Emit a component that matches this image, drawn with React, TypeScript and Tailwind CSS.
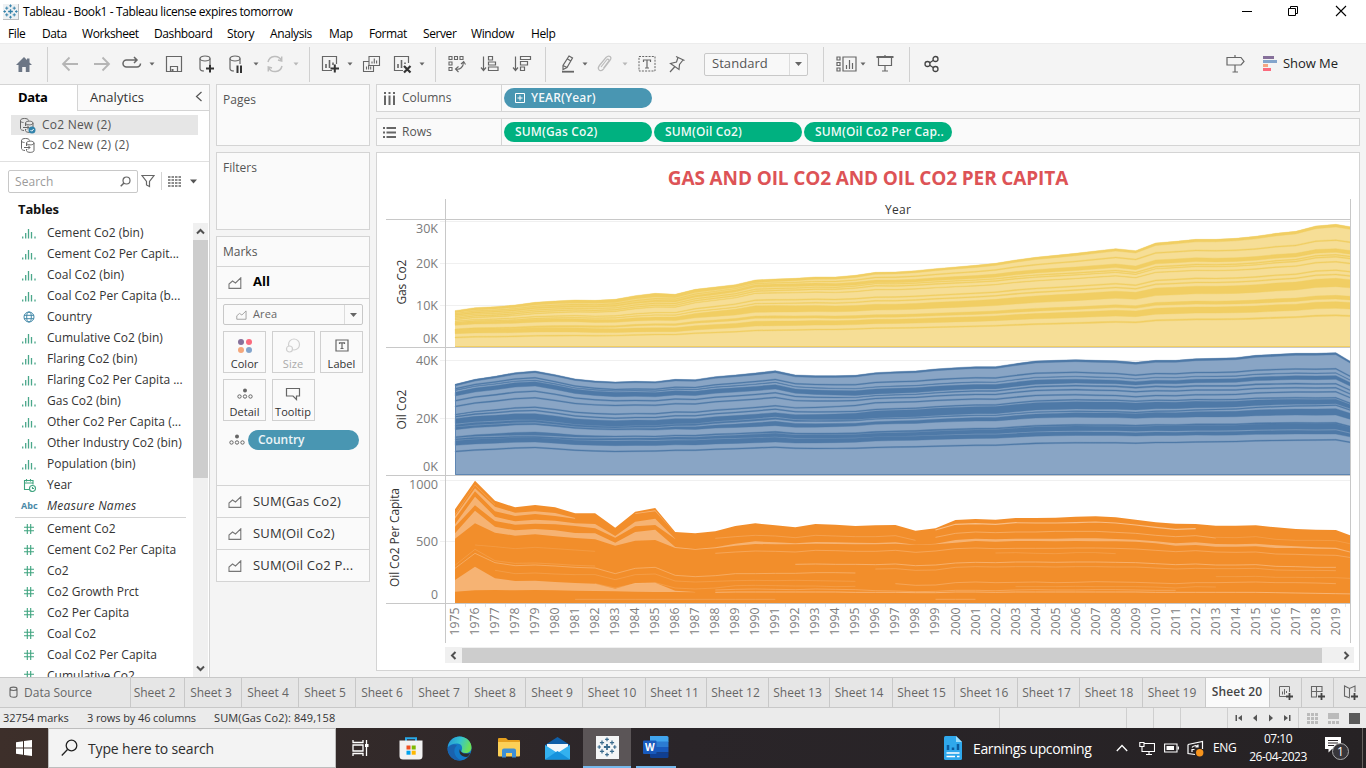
import type { ReactNode } from "react";

const CHART_LEFT = 455;
const STEP = 20.02;
const xOf = (year: number) => CHART_LEFT + (year - 1975) * STEP;

// Upper edges of each stacked total, one value per year from 1975 to 2020, in thirds of a pixel.
const gasTop = [362, 353, 350, 345, 337, 333, 330, 331, 328, 317, 310, 313, 298, 291, 284, 270, 267, 265, 261, 261, 256, 247, 246, 242, 236, 231, 226, 220, 210, 202, 196, 190, 183, 176, 182, 159, 154, 148, 148, 145, 139, 130, 124, 108, 103, 113];
const oilTop = [583, 568, 559, 548, 543, 554, 567, 573, 576, 574, 575, 568, 569, 560, 555, 549, 542, 555, 557, 557, 556, 548, 545, 543, 537, 533, 530, 530, 521, 513, 511, 509, 511, 512, 517, 511, 511, 506, 505, 503, 496, 493, 490, 490, 488, 524];
const capTop = [118, 32, 92, 112, 105, 112, 130, 130, 173, 125, 114, 186, 190, 184, 168, 160, 166, 172, 162, 164, 168, 166, 165, 182, 175, 150, 147, 149, 144, 144, 143, 140, 139, 142, 149, 157, 161, 162, 167, 167, 166, 172, 177, 179, 180, 202];

type Band = [number, number][];

const gasKeys = [1975, 1985, 1990, 1996, 2009, 2019];
const gasBands: Band[] = [
  [[362, 368], [310, 321], [270, 278], [247, 253], [182, 189], [103, 111]],
  [[370, 372], [324, 328], [280, 282], [261, 264], [207, 210], [149, 152]],
  [[373, 377], [330, 335], [284, 292], [270, 278], [228, 239], [176, 187]],
  [[379, 381], [338, 341], [296, 299], [280, 282], [246, 249], [193, 196]],
  [[383, 386], [344, 347], [302, 305], [286, 289], [252, 254], [199, 202]],
  [[388, 390], [350, 352], [309, 311], [298, 300], [262, 264], [214, 217]],
  [[393, 395], [367, 369], [329, 332], [320, 323], [284, 287], [239, 242]],
  [[397, 400], [374, 376], [340, 342], [331, 334], [295, 298], [252, 255]],
  [[399, 406], [381, 391], [347, 367], [343, 360], [307, 328], [265, 290]],
  [[417, 421], [401, 406], [378, 385], [374, 382], [347, 355], [316, 327]],
  [[419, 431], [413, 425], [394, 408], [388, 401], [363, 380], [335, 355]],
  [[441, 444], [432, 435], [420, 423], [413, 416], [395, 399], [374, 378]],
];

const oilKeys = [1975, 1979, 1983, 1991, 1996, 2009, 2019];
const oilBands: Band[] = [
  [[583, 588], [543, 548], [576, 580], [542, 548], [548, 553], [517, 523], [488, 494]],
  [[595, 598], [562, 565], [597, 600], [567, 570], [576, 579], [554, 557], [535, 538]],
  [[600, 602], [570, 572], [602, 604], [576, 578], [590, 592], [566, 568], [548, 550]],
  [[607, 618], [575, 588], [607, 620], [584, 597], [597, 612], [575, 585], [557, 568]],
  [[631, 634], [602, 605], [631, 634], [607, 610], [616, 618], [591, 595], [580, 583]],
  [[648, 651], [622, 625], [645, 648], [621, 624], [624, 627], [604, 607], [592, 595]],
  [[673, 675], [650, 653], [671, 674], [646, 649], [637, 640], [619, 622], [604, 607]],
  [[679, 682], [660, 663], [683, 686], [656, 659], [657, 660], [632, 635], [622, 625]],
  [[686, 701], [671, 689], [692, 709], [668, 680], [663, 684], [639, 660], [628, 641]],
  [[704, 710], [691, 697], [710, 714], [683, 688], [686, 688], [666, 669], [644, 647]],
  [[712, 719], [700, 704], [716, 720], [694, 707], [695, 703], [671, 685], [656, 675]],
  [[740, 743], [726, 736], [738, 741], [724, 728], [724, 728], [705, 709], [697, 701]],
  [[746, 750], [739, 743], [745, 750], [730, 740], [730, 740], [710, 724], [701, 718]],
  [[752, 766], [743, 756], [753, 767], [742, 756], [741, 753], [728, 738], [721, 732]],
  [[783, 786], [771, 774], [783, 786], [770, 773], [771, 774], [758, 761], [748, 751]],
];

// Stretch each band between its keyed years so that it follows the total's outline.
function bandPath(band: Band, keys: number[], top: number[], base: number, offset: number) {
  const fraction = (year: number, side: 0 | 1) => {
    let k = 0;
    while (k < keys.length - 2 && year > keys[k + 1]) k++;
    const part = (i: number) => (base - band[i][side]) / (base - top[keys[i] - 1975]);
    const t = Math.min(1, (year - keys[k]) / (keys[k + 1] - keys[k]));
    return part(k) * (1 - t) + part(k + 1) * t;
  };
  const point = (i: number, side: 0 | 1) =>
    `${xOf(1975 + i).toFixed(1)},${(offset + (base - fraction(1975 + i, side) * (base - top[i])) / 3).toFixed(2)}`;
  const upper = top.map((_, i) => point(i, 0));
  const lower = top.map((_, i) => point(i, 1)).reverse();
  return `M${[...upper, ...lower].join("L")}Z`;
}

function areaPath(top: number[], base: number, offset: number) {
  const pts = top.map((v, i) => `${xOf(1975 + i).toFixed(1)},${(offset + v / 3).toFixed(2)}`);
  return `M${xOf(1975)},${offset + base / 3}L${pts.join("L")}L${xOf(2020)},${offset + base / 3}Z`;
}

type Strip = { from: number; rows: Band };
const capStrips: Strip[] = [
  { from: 1975, rows: [[133, 135], [44, 46], [103, 104]] },
  { from: 1975, rows: [[139, 146], [55, 64], [110, 124], [128, 138], [124, 132], [129, 138], [144, 146]] },
  { from: 1975, rows: [[163, 170], [80, 106], [140, 153], [154, 164], [149, 161], [152, 163], [160, 168], [162, 175], [198, 203], [155, 169], [146, 165], [206, 207]] },
  { from: 1975, rows: [[190, 206], [122, 160], [170, 188], [181, 197], [177, 193], [181, 199], [189, 204], [190, 208], [218, 227], [186, 212], [179, 210], [231, 234], [237, 239], [232, 235], [221, 227], [214, 222], [217, 223], [220, 223], [216, 221], [217, 222], [218, 223], [219, 223], [217, 221], [224, 225], [221, 223], [210, 218], [206, 213], [208, 215], [206, 213], [206, 213], [206, 214], [205, 213], [205, 214], [207, 214], [209, 215], [214, 220], [220, 227], [217, 225], [222, 230], [223, 230], [221, 229], [226, 234], [229, 234], [232, 236], [233, 237], [249, 252]] },
  { from: 1975, rows: [[330, 365], [290, 361], [325, 360], [333, 361], [332, 360], [336, 361], [339, 362], [341, 363], [356, 364], [339, 365], [338, 366], [362, 366], [366, 367]] },
  { from: 1984, rows: [[130, 132], [121, 124], [190, 190]] },
];

const capLines: { from: number; ys: number[]; w: number }[] = [
  { from: 1975, w: 0.6, ys: [295, 250, 278, 287, 285, 288, 292, 294, 311, 295, 292, 316, 320, 317, 311, 311, 310, 310, 308, 308, 309] },
  { from: 1975, w: 0.3, ys: [286, 238, 272, 280, 279, 282, 286, 288] },
  { from: 1976, w: 0.25, ys: [225, 230, 236, 232, 236, 240, 244] },
  { from: 1977, w: 0.3, ys: [301, 311, 309, 312, 314, 314, 329, 314, 312, 333, 336, 334, 332, 331, 332, 331, 332, 333, 334] },
  { from: 1982, w: 0.3, ys: [341, 354, 341, 338, 354, 357, 354, 347, 346, 347, 348, 348, 350, 349] },
  { from: 1981, w: 0.4, ys: [388, 388, 388, 388, 388, 388, 388, 388, 388, 388, 388] },
  { from: 1988, w: 0.4, ys: [205, 200, 196, 198, 203, 196, 198, 200, 200, 197, 211] },
  { from: 1988, w: 0.5, ys: [250, 246, 243, 244, 246, 241, 242, 244, 244, 241, 247, 243, 236, 234, 236, 235, 235, 235, 234, 234, 235, 237, 241, 245, 242, 246, 247, 246, 252, 253, 255, 256, 265] },
  { from: 1992, w: 0.7, ys: [283, 282, 283, 283, 284, 282, 287, 285, 279, 277, 278, 276, 276, 277, 276, 276, 277, 278, 281, 284, 282, 285, 285, 284, 289, 290, 292, 292] },
  { from: 1996, w: 0.4, ys: [297, 296, 301, 300, 292, 290, 291, 290, 290, 291, 290, 290, 291, 291, 294, 297, 295, 296, 296, 295, 300, 301, 301, 302] },
  { from: 1997, w: 0.5, ys: [341, 346, 345, 338, 336, 338, 337, 336, 338, 337, 335, 336, 337, 339, 341, 338, 338, 337, 336, 338, 338, 339, 341] },
  { from: 1988, w: 0.5, ys: [360, 358, 357, 358, 359, 357, 358, 359, 362, 363, 365, 364, 361, 361, 362, 360, 359, 360, 360, 359, 359, 360, 361, 361] },
  { from: 1988, w: 0.8, ys: [367, 366, 366, 366, 366, 366, 366, 367, 367, 367, 368, 368, 366, 366, 367, 366, 366, 366, 366, 366, 366, 366, 367, 367, 367, 367, 367, 367, 368, 369, 370, 371, 372] },
  { from: 1999, w: 1.1, ys: [180, 163, 161, 163, 158, 159, 159, 158, 156, 159, 165, 172, 178, 176] },
  { from: 1999, w: 0.6, ys: [202, 190, 186, 188, 186, 186, 184, 184, 184, 187, 190, 196, 200, 197, 204] },
  { from: 1999, w: 0.5, ys: [388, 388, 388] },
  { from: 2013, w: 0.3, ys: [202, 203, 200, 208, 211, 211, 212, 225] },
  { from: 2003, w: 0.3, ys: [350, 350, 350, 349, 350, 350, 350, 351, 354, 350, 351] },
  { from: 2002, w: 0.3, ys: [249, 248, 250, 251, 248, 248, 251] },
  { from: 2013, w: 0.3, ys: [320, 320, 319, 322, 322, 323, 323, 326] },
];

function stripPath({ from, rows }: Strip) {
  const at = (i: number, side: 0 | 1) => `${xOf(from + i).toFixed(1)},${(470 + rows[i][side] / 3).toFixed(2)}`;
  const up = rows.map((_, i) => at(i, 0));
  const down = rows.map((_, i) => at(i, 1)).reverse();
  return `M${[...up, ...down].join("L")}Z`;
}

const axis: [string, number, number][] = [
  ["30K", 228, 22], ["20K", 263, 22], ["10K", 305, 22], ["0K", 338, 15], ["40K", 360, 22],
  ["20K", 418, 22], ["0K", 466, 15], ["1000", 484, 29], ["500", 541, 22], ["0", 594, 7],
];

function Chart() {
  const years = Array.from({ length: 45 }, (_, i) => 1975 + i);
  return (
    <svg className="block" width="982" height="454" viewBox="377 193 982 454" fontFamily="'Open Sans', sans-serif">
      <defs>
        <clipPath id="plot">
          <rect x="454.5" y="200" width="895.5" height="404" />
        </clipPath>
      </defs>
      <g stroke="#f0f0f0" shapeRendering="crispEdges">
        {[221.5, 263.5, 305.5, 360.5, 418.5, 480.5, 541.5].map((y) => (
          <path key={y} d={`M440 ${y}H1350`} />
        ))}
      </g>
      <g clipPath="url(#plot)">
        <path d={areaPath(gasTop, 471, 190)} fill="#f6de96" />
        {gasBands.map((b, i) => (
          <path key={i} d={bandPath(b, gasKeys, gasTop, 471, 190)} fill="#f1ce63" stroke="#f1ce63" strokeWidth="0.4" />
        ))}
        <path d="M455 346.5H1350" stroke="#f1ce63" />
        <path d={areaPath(oilTop, 856, 190)} fill="#89a5c5" />
        {oilBands.map((b, i) => (
          <path key={i} d={bandPath(b, oilKeys, oilTop, 856, 190)} fill="#4e79a7" stroke="#4e79a7" strokeWidth="0.4" />
        ))}
        <path d="M455.5 385V474.5H1350" stroke="#5f86b2" fill="none" />
        <path d={areaPath(capTop, 400, 470)} fill="#f28e2b" />
        {capStrips.map((s, i) => (
          <path key={i} d={stripPath(s)} fill="#f6b373" />
        ))}
        {capLines.map((l, i) => (
          <path
            key={i}
            d={"M" + l.ys.map((y, k) => `${xOf(l.from + k).toFixed(1)},${(470 + y / 3).toFixed(2)}`).join("L")}
            fill="none"
            stroke="#f8bd85"
            strokeWidth={l.w}
          />
        ))}
      </g>
      <path
        d="M445.5 199V643M1350.5 199V643M386 219.5H1350M386 347.5H1350M386 475.5H1350M386 603.5H1350"
        stroke="#c8c8c8"
        shapeRendering="crispEdges"
      />
      <g stroke="#e4e4e4" shapeRendering="crispEdges">
        {years.map((y) => (
          <path key={y} d={`M${xOf(y) + 10} 604V607`} />
        ))}
      </g>
      <g fill="#7b7b7b" fontSize="12.5" textAnchor="end">
        {axis.map(([t, y, w], i) => (
          <text key={i} x="438" y={y + 4.5} textLength={w} lengthAdjust="spacingAndGlyphs">{t}</text>
        ))}
      </g>
      <g fill="#7d7d7d" fontSize="12.5" textAnchor="middle">
        {years.map((y) => (
          <text key={y} transform={`translate(${xOf(y) + 4} 621.5) rotate(-90)`} textLength="28" lengthAdjust="spacingAndGlyphs">{y}</text>
        ))}
      </g>
      <g fill="#333" fontSize="12" textAnchor="middle">
        <text x="898" y="214" textLength="26">Year</text>
        <text transform="translate(405.5 282) rotate(-90)" textLength="45">Gas Co2</text>
        <text transform="translate(405.5 409.5) rotate(-90)" textLength="40">Oil Co2</text>
        <text transform="translate(398.5 537.5) rotate(-90)" textLength="99">Oil Co2 Per Capita</text>
      </g>
    </svg>
  );
}

function Icon({ w = 20, h = 20, color = "#666", sw = 1.2, children }: { w?: number; h?: number; color?: string; sw?: number; children: ReactNode }) {
  return (
    <svg className="block shrink-0" width={w} height={h} viewBox={`0 0 ${w} ${h}`} fill="none" stroke={color} strokeWidth={sw}>
      {children}
    </svg>
  );
}

function Tile({ className, children }: { className: string; children: ReactNode }) {
  return <div className={`flex h-full shrink-0 items-center justify-center ${className}`}>{children}</div>;
}

function Caret({ light = false }: { light?: boolean }) {
  return (
    <svg className="block shrink-0" width="6" height="4" viewBox="0 0 6 4">
      <path d="M0.5 0.5H5.5L3 3.5Z" fill={light ? "#b8b8b8" : "#666"} />
    </svg>
  );
}

const Divider = ({ className = "" }: { className?: string }) => <div className={`h-[35px] w-px shrink-0 bg-[#d0d0d0] ${className}`} />;

function TableauMark({ size, color }: { size: number; color: string }) {
  const plus = (x: number, y: number, r: number) => `M${x - r} ${y}H${x + r}M${x} ${y - r}V${y + r}`;
  return (
    <svg className="block" width={size} height={size} viewBox="0 0 18 18" stroke={color} strokeWidth="1.1">
      <path d={plus(9, 9, 2.8)} strokeWidth="1.6" />
      <path d={plus(4.5, 5, 1.9) + plus(13.5, 5, 1.9) + plus(4.5, 13, 1.9) + plus(13.5, 13, 1.9)} />
      <path d={plus(9, 2.2, 1.7) + plus(9, 15.8, 1.7) + plus(2, 9, 1.6) + plus(16, 9, 1.6)} />
    </svg>
  );
}

function TitleBar() {
  return (
    <div className="flex h-[23px] items-center bg-white pl-[3px]">
      <div className="flex h-4 w-4 items-center justify-center border-r border-b border-[#b9bdc0] bg-[#eef1f3]">
        <TableauMark size={15} color="#2f7fa8" />
      </div>
      <span className="ml-1 pt-px text-[12px] tracking-[-0.39px] text-black">Tableau - Book1 - Tableau license expires tomorrow</span>
      <div className="mr-[19px] ml-auto flex items-center gap-9 pb-[2px]">
        <Icon w={10} h={12} color="#000" sw={1}><path d="M0 6.500H10" /></Icon>
        <Icon w={11} h={12} color="#000" sw={1}><path d="M.5 3.500H7.500V10.500H.5ZM2.500 3.500V1.500H9.500V8.500H7.500" /></Icon>
        <Icon w={12} h={12} color="#000" sw={1.1}><path d="M1 1L11 11M11 1L1 11" /></Icon>
      </div>
    </div>
  );
}

function MenuBar() {
  return (
    <div className="flex h-5 items-center bg-white pt-[2px] pl-2 text-[12px] tracking-[-0.4px] text-black">
      <span className="w-[34px]">File</span>
      <span className="w-10">Data</span>
      <span className="w-[72px]">Worksheet</span>
      <span className="w-[73px]">Dashboard</span>
      <span className="w-[43px]">Story</span>
      <span className="w-[59px]">Analysis</span>
      <span className="w-10">Map</span>
      <span className="w-[54px]">Format</span>
      <span className="w-12">Server</span>
      <span className="w-[60px]">Window</span>
      <span>Help</span>
    </div>
  );
}

function Toolbar() {
  return (
    <div className="flex h-[41px] items-center border-t border-[#ececec] bg-[#f4f4f4]">
      <Tile className="w-[47px]">
        <svg width="18" height="17" viewBox="0 0 18 17"><path d="M9 1L1 9H3.500V16H7.200V11H10.800V16H14.500V9H17L14.500 6.500V2.500H12V4Z" fill="#6c7685" /></svg>
      </Tile>
      <Divider className="mr-[6px]" />
      <Tile className="w-8"><Icon color="#b5b5b5" sw={1.8}><path d="M18 10H3M9.500 3.500L3 10L9.500 16.500" /></Icon></Tile>
      <Tile className="w-8"><Icon color="#b5b5b5" sw={1.8}><path d="M2 10H17M10.500 3.500L17 10L10.500 16.500" /></Icon></Tile>
      <Tile className="w-7"><Icon sw={1.5}><path d="M14.500 6H4.500A3.500 3.500 0 0 0 4.500 13H15A3.500 3.500 0 0 0 18.500 9.500M12 3L15 6L12 9" /></Icon></Tile>
      <Tile className="w-3"><Caret /></Tile>
      <Tile className="w-8"><Icon w={18} h={18}><path d="M1.500 1.500H16.500V16.500H1.500ZM5.500 16.500V11.500H12.500V16.500" /><path d="M7.500 14V16.500" strokeWidth="2" /></Icon></Tile>
      <Tile className="w-8">
        <Icon><ellipse cx="9" cy="4.500" rx="5" ry="2.500" /><path d="M4 4.500V14.500C4 16 6 17 8 17M14 4.500V10" /><path d="M10 14.500H18M14 10.500V18.500" stroke="#333" strokeWidth="2" /></Icon>
      </Tile>
      <Tile className="w-7">
        <Icon><ellipse cx="9" cy="4.500" rx="5" ry="2.500" /><path d="M4 4.500V14.500C4 16 6 17 8 17M14 4.500V10" /><path d="M11.500 11.500V19M15 11.500V19" stroke="#333" strokeWidth="2" /></Icon>
      </Tile>
      <Tile className="w-3"><Caret /></Tile>
      <Tile className="w-[26px]">
        <Icon color="#bdbdbd" sw={1.5}><path d="M3 8A7.200 7.200 0 0 1 16.500 6.500M17 12A7.200 7.200 0 0 1 3.500 13.500M16.700 2.500V7L13 6M3.300 17.500V13L7 14" /></Icon>
      </Tile>
      <Tile className="mr-[5px] w-4"><Caret light /></Tile>
      <Divider className="mr-[6px]" />
      <Tile className="w-7">
        <Icon><path d="M12 16.500H2.500V2.500H16.500V10" /><path d="M6 14V10M9.500 14V6M13 11V8.500" strokeWidth="1.600" /><path d="M10.500 14.500H19M14.800 10.500V18.500" stroke="#333" strokeWidth="2" /></Icon>
      </Tile>
      <Tile className="w-3"><Caret /></Tile>
      <Tile className="w-[30px]"><Icon sw={1.1}><path d="M8 2.500H18.500V11.500H8ZM8 7.500H2.500V17.500H12.500V11.500M11 9.500V7.500M13.300 9.500V4.500M15.600 9.500V6.500M5.500 15.500V12.500M7.600 15.500V11M9.700 15.500V12.500" /></Icon></Tile>
      <Tile className="w-8">
        <Icon><path d="M11 16.500H2.500V2.500H16.500V9" /><path d="M6 14V10M9.500 14V6M13 10V8.500" strokeWidth="1.600" /><path d="M12 12L18.500 18.500M18.500 12L12 18.500" stroke="#333" strokeWidth="2.200" /></Icon>
      </Tile>
      <Tile className="mr-[9px] w-2"><Caret /></Tile>
      <Divider className="mr-[5px]" />
      <Tile className="w-8"><Icon sw={1.1}><path d="M2 2.500H5V5.500H2ZM7.500 2.500H10.500V5.500H7.500ZM13 2.500H16V5.500H13ZM2 8H5V11H2ZM2 13.500H5V16.500H2ZM9 15C13 16 16.500 13 16.500 8M14 10L16.700 7.500L18.500 10.500M11.500 12.500L8.500 15L11.500 18" /></Icon></Tile>
      <Tile className="ml-px w-8"><Icon><path d="M3.500 2.500V16.500M1 13.500L3.500 16.500L6 13.500M8.500 2.500H12.500V6H8.500ZM8.500 8H15.500V11H8.500ZM8.500 13H18V16.500H8.500Z" /></Icon></Tile>
      <Tile className="mr-[7px] w-8"><Icon><path d="M3.500 2.500V16.500M1 13.500L3.500 16.500L6 13.500M8.500 2.500H18.500V5.500H8.500ZM8.500 7.500H15.500V11H8.500ZM8.500 13H12.500V16.500H8.500Z" /></Icon></Tile>
      <Divider className="mr-2" />
      <Tile className="w-7"><Icon><path d="M11 2L14.500 4L9 13.500L5 15.500V11.500ZM9.500 5L13 7M5 11.500L9 13.500" /><path d="M4 17.700H16" strokeWidth="1.800" /></Icon></Tile>
      <Tile className="w-[6px]"><Caret /></Tile>
      <Tile className="w-[34px]"><Icon color="#bbb"><path d="M4 12L11 3.500C14 .5 17.500 3 15 6.500L8 15.500C5 18.500 1.500 15 4.500 11.500M6 13L11.500 6C13 4 15 6 13.500 7.500L8.500 14" /></Icon></Tile>
      <Tile className="w-[6px]"><Caret light /></Tile>
      <Tile className="ml-[3px] w-8">
        <Icon><path d="M2 2.500H18V17H2Z" strokeDasharray="2 1.200" strokeWidth="1" /><path d="M6.500 8V6H13.500V8M10 6V14M8 14H12" /></Icon>
      </Tile>
      <Tile className="w-7"><Icon><path d="M9 2.500L17.500 6.500M11 3.500L9.500 8L3.500 9.500L12 15.500L12.500 10.500L16 6M8 12.500L3 18" /></Icon></Tile>
      <div className="ml-[13px] flex h-[23px] w-[104px] shrink-0 items-center rounded-[2px] border border-[#c8c8c8] bg-[#f8f8f8]">
        <span className="w-[84px] pl-[7px] text-[13px] tracking-[0.05px] text-[#555]">Standard</span>
        <div className="flex h-full flex-1 items-center justify-center border-l border-[#dcdcdc]">
          <svg width="7" height="4" viewBox="0 0 7 4"><path d="M0 0H7L3.500 4Z" fill="#666" /></svg>
        </div>
      </div>
      <Divider className="mr-2 ml-[15px]" />
      <Tile className="w-7"><Icon w={22}><path d="M2 3H5V6H2ZM2 8.500H5V11.500H2ZM2 14H5V17H2ZM8 3H21V17H8ZM11.500 15V11M14.500 15V6M17.500 15V9" /></Icon></Tile>
      <Tile className="w-[6px]"><Caret /></Tile>
      <Tile className="ml-[3px] w-8"><Icon><path d="M1.500 3H18.500" strokeWidth="2" /><path d="M3.500 3V11.500H16.500V3M10 11.500V17M7 17H13M10 1V3" /></Icon></Tile>
      <Divider className="mr-2 ml-2" />
      <Tile className="w-7"><Icon color="#444" sw={1.3}><circle cx="5.500" cy="10" r="2.500" /><circle cx="13.500" cy="5" r="2.500" /><circle cx="13.500" cy="15" r="2.500" /><path d="M7.700 8.700L11.500 6.300M7.700 11.300L11.500 13.700" /></Icon></Tile>
      <Tile className="ml-auto w-7"><Icon><path d="M2 3.500H16L19 7.500L16 11H2ZM10 1V3.500M10 11V18M7.500 18H13" /></Icon></Tile>
      <div className="mr-7 ml-[14px] flex items-center">
        <svg width="15" height="16" viewBox="0 0 15 16"><path d="M0 0H11V3H0Z" fill="#86709a" /><path d="M0 4H14V7H0Z" fill="#84a5cc" /><path d="M0 8H5V11H0Z" fill="#f4a582" /><path d="M0 12H8V15H0Z" fill="#fb6a7d" /></svg>
        <span className="ml-[5px] text-[13px] tracking-[-0.05px] text-[#222]">Show Me</span>
      </div>
    </div>
  );
}

function SourceIcon({ checked = false }: { checked?: boolean }) {
  return (
    <Icon w={17} h={17} color="#666" sw={1}>
      <path d="M5 13.500C3 13.500 1.500 12.500 1.500 11.500V3.500M1.500 3.500C1.500 .8 9.500 .8 9.500 3.500M1.500 3.500C1.500 5 3 5.500 4.500 5.500M6.500 6V9M6.500 12V13.500C6.500 16 14 16 14 13.500V6M6.500 6C6.500 8.500 14 8.500 14 6C14 3.500 6.500 3.500 6.500 6ZM4 10.500H10M8 8.500L10 10.500L8 12.500" />
      {checked && <><circle cx="13" cy="13" r="3.500" fill="#3283ab" stroke="none" /><path d="M11.500 13L12.700 14.200L14.700 12" stroke="#fff" /></>}
    </Icon>
  );
}

type Kind = "bin" | "geo" | "date" | "text" | "num";
function FieldIcon({ kind }: { kind: Kind }) {
  if (kind === "bin") return <Icon w={14} h={12} color="#4aa78a" sw={1.3}><path d="M.7 9.500V11.500M3.700 6V11.500M6.500 2V11.500M9.500 5V11.500M13 9.500V11.500" /></Icon>;
  if (kind === "geo") return <Icon w={14} h={14} color="#4389a8" sw={1}><circle cx="7" cy="7" r="5" /><ellipse cx="7" cy="7" rx="2.300" ry="5" /><path d="M2 5.300H12M2 8.700H12" /></Icon>;
  if (kind === "date") return <Icon w={14} h={14} color="#3fa47f" sw={1.1}><path d="M7 11.500H2.500V2.500H11V6.500M2.500 5H11M4.500 1V3.500M8.500 1V3.500" /><circle cx="10.500" cy="10.500" r="3" /><path d="M10.500 9V10.500H12" /></Icon>;
  if (kind === "text") return <span className="w-4 text-[9px] leading-none font-bold text-[#4a8aa8]">Abc</span>;
  return <Icon w={12} h={12} color="#3fa47f" sw={1.1}><path d="M1 4.300H11M1 7.700H11M4.300 1V11M7.700 1V11" /></Icon>;
}

const dims: [string, Kind][] = [
  ["Cement Co2 (bin)", "bin"], ["Cement Co2 Per Capit...", "bin"], ["Coal Co2 (bin)", "bin"], ["Coal Co2 Per Capita (b...", "bin"],
  ["Country", "geo"], ["Cumulative Co2 (bin)", "bin"], ["Flaring Co2 (bin)", "bin"], ["Flaring Co2 Per Capita ...", "bin"],
  ["Gas Co2 (bin)", "bin"], ["Other Co2 Per Capita (...", "bin"], ["Other Industry Co2 (bin)", "bin"], ["Population (bin)", "bin"],
  ["Year", "date"], ["Measure Names", "text"],
];
const measures = ["Cement Co2", "Cement Co2 Per Capita", "Co2", "Co2 Growth Prct", "Co2 Per Capita", "Coal Co2", "Coal Co2 Per Capita", "Cumulative Co2"];

function Field({ name, kind }: { name: string; kind: Kind }) {
  return (
    <div className="flex h-[21px] shrink-0 items-center">
      <div className="flex w-[18px] justify-center">
        <FieldIcon kind={kind} />
      </div>
      <span className={`ml-[9px] whitespace-nowrap ${kind === "text" ? "tracking-[0.3px] italic" : ""}`}>{name}</span>
    </div>
  );
}

const Chevron = ({ d }: { d: string }) => <Icon w={9} h={9} color="#505050" sw={2}><path d={d} /></Icon>;

function DataPane() {
  return (
    <div className="flex w-[210px] shrink-0 flex-col border-t border-r border-[#d4d4d4] bg-white">
      <div className="flex h-[26px] shrink-0">
        <div className="w-[77px] pt-[3px] pl-[18px] text-[13px] font-bold tracking-[-0.35px] text-black">Data</div>
        <div className="flex flex-1 justify-between border-b border-l border-[#d4d4d4] bg-[#fafafa] pt-[3px] pr-[6px] pl-3 text-[13px] tracking-[0.05px] text-[#333]">
          <span>Analytics</span>
          <span className="pt-[3px]"><Icon w={8} h={11} color="#555"><path d="M6.500 1L1.500 5.500L6.500 10" /></Icon></span>
        </div>
      </div>
      <div className="h-[51px] shrink-0 border-b border-[#e0e0e0] pt-1 pl-[11px] text-[12px] tracking-[0.22px] text-[#555]">
        <div className="flex h-5 w-[187px] items-center bg-[#e6e6e6] pl-2">
          <SourceIcon checked />
          <span className="ml-[6px]">Co2 New (2)</span>
        </div>
        <div className="flex h-5 items-center pl-[9px]">
          <SourceIcon />
          <span className="ml-[5px]">Co2 New (2) (2)</span>
        </div>
      </div>
      <div className="flex h-[38px] shrink-0 items-center pl-2">
        <div className="flex h-[23px] w-[130px] items-center justify-between rounded-[2px] border border-[#c8c8c8] pr-[6px] pl-[6px]">
          <span className="pt-px text-[12px] tracking-[0.05px] text-[#9b9b9b]">Search</span>
          <Icon w={11} h={11} color="#666"><circle cx="6.500" cy="4.500" r="3.500" /><path d="M4 7L.7 10.300" strokeWidth="1.500" /></Icon>
        </div>
        <span className="ml-[3px]"><Icon w={14} h={14}><path d="M1 1.500H13L8.500 7.500V12.500L5.500 11V7.500Z" /></Icon></span>
        <div className="mx-[6px] h-[18px] w-px bg-[#d4d4d4]" />
        <Icon w={13} h={11} sw={1.5}><path d="M0 1H13M0 4H13M0 7H13M0 10H13" strokeDasharray="2.500 1" /></Icon>
        <svg className="ml-[9px]" width="7" height="5" viewBox="0 0 7 5"><path d="M0 0.500H7L3.500 4.500Z" fill="#555" /></svg>
      </div>
      <div className="h-[22px] shrink-0 pl-[18px] text-[13px] leading-[19px] font-bold tracking-[-0.15px] text-[#111]">Tables</div>
      <div className="flex h-[455px]">
        <div className="flex w-[193px] flex-col overflow-hidden pl-5 text-[12px] text-[#333]">
          {dims.map(([n, k]) => <Field key={n} name={n} kind={k} />)}
          <div className="-ml-[5px] mt-px h-px w-[171px] shrink-0 bg-[#d4d4d4]" />
          {measures.map((n) => <Field key={n} name={n} kind="num" />)}
        </div>
        <div className="mt-px flex w-[15px] flex-col items-center bg-[#f0f0f0]">
          <div className="flex h-[17px] items-center"><Chevron d="M1 6.500L4.500 3L8 6.500" /></div>
          <div className="h-[238px] w-full bg-[#cdcdcd]" />
          <div className="mt-auto flex h-[17px] items-center"><Chevron d="M1 2.500L4.500 6L8 2.500" /></div>
        </div>
      </div>
    </div>
  );
}

const AreaIcon = ({ small = false }: { small?: boolean }) => (
  <svg className="block shrink-0" width={small ? 11 : 14} height={small ? 10 : 12} viewBox="0 0 14 12" fill="none" stroke={small ? "#999" : "#777"} strokeWidth="1.1">
    <path d="M1 11.400V7L4.500 4L7.500 6L12.800 .8V11.400Z" />
  </svg>
);
const DetailIcon = () => (
  <Icon w={16} h={12} color="#666" sw={1}>
    <circle cx="8" cy="2.500" r="2" fill="#666" stroke="none" />
    <circle cx="2.500" cy="8.500" r="1.700" /><circle cx="8" cy="8.500" r="1.700" /><circle cx="13.500" cy="8.500" r="1.700" />
  </Icon>
);

function MarkButton({ label, muted = false, children }: { label: string; muted?: boolean; children: ReactNode }) {
  return (
    <div className="flex h-[42px] w-[43px] flex-col items-center border border-[#d0d0d0] bg-[#fafafa]">
      <div className="flex h-[24px] items-center pt-[3px]">{children}</div>
      <span className={`text-[11px] leading-[15px] tracking-[0.05px] ${muted ? "text-[#aaa]" : "text-[#333]"}`}>{label}</span>
    </div>
  );
}

function Cards() {
  return (
    <div className="flex w-[154px] shrink-0 flex-col gap-[6px] text-[12px] text-[#555]">
      <div className="h-[62px] border border-[#d4d4d4] bg-[#fafafa] px-[6px] py-[6px]">Pages</div>
      <div className="h-[78px] border border-[#d4d4d4] bg-[#fafafa] px-[6px] py-[6px]">Filters</div>
      <div className="h-[346px] border border-[#d4d4d4] bg-[#fafafa]">
        <div className="h-[30px] border-b border-[#d4d4d4] px-[6px] py-[6px]">Marks</div>
        <div className="flex h-8 items-center border-b border-[#d4d4d4] pl-[11px]">
          <AreaIcon />
          <span className="ml-[11px] pb-[2px] text-[13px] font-bold text-black">All</span>
        </div>
        <div className="h-[187px] border-b border-[#d4d4d4] px-[6px] pt-[5px]">
          <div className="flex h-[21px] w-[140px] items-center rounded-[2px] border border-[#c8c8c8] bg-[#fafafa] pl-3">
            <AreaIcon small />
            <span className="ml-[6px] flex-1 text-[11px] tracking-[0.1px] text-[#666]">Area</span>
            <div className="flex h-full w-[18px] items-center justify-center border-l border-[#dcdcdc]">
              <svg width="7" height="4" viewBox="0 0 7 4"><path d="M0 0H7L3.500 4Z" fill="#666" /></svg>
            </div>
          </div>
          <div className="mt-[6px] grid w-[140px] grid-cols-[43px_43px_43px] justify-between gap-y-[6px]">
            <MarkButton label="Color">
              <svg width="16" height="16" viewBox="0 0 16 16"><circle cx="4" cy="4" r="3" fill="#86709a" /><circle cx="12" cy="4" r="3" fill="#fb6a7d" /><circle cx="4" cy="12" r="3" fill="#f4a77c" /><circle cx="12" cy="12" r="3" fill="#82a4cc" /></svg>
            </MarkButton>
            <MarkButton label="Size" muted><Icon w={16} h={16} color="#d0d0d0"><circle cx="9" cy="6.500" r="5.500" /><circle cx="4.500" cy="11" r="3" fill="#fafafa" /></Icon></MarkButton>
            <MarkButton label="Label"><Icon w={14} h={13}><path d="M1 1H13V12H1ZM4.500 5V3.800H9.500V5M7 3.800V9.500M5.500 9.500H8.500" /></Icon></MarkButton>
            <MarkButton label="Detail"><DetailIcon /></MarkButton>
            <MarkButton label="Tooltip"><Icon w={16} h={14}><path d="M1.500 1.500H14.500V9H11.500V12.500L8 9H1.500Z" /></Icon></MarkButton>
          </div>
          <div className="mt-[9px] flex items-center pl-[6px]">
            <DetailIcon />
            <div className="ml-[3px] h-5 w-[111px] rounded-full bg-[#4996b2] pl-[10px] text-[12px] leading-[19px] font-semibold text-white/90">Country</div>
          </div>
        </div>
        {["SUM(Gas Co2)", "SUM(Oil Co2)", "SUM(Oil Co2 P..."].map((t) => (
          <div key={t} className="flex h-8 items-center border-b border-[#d4d4d4] pl-[11px] text-[13px] tracking-[0.2px] text-[#333] last:h-[31px] last:border-b-0">
            <AreaIcon />
            <span className="ml-[11px]">{t}</span>
          </div>
        ))}
      </div>
    </div>
  );
}

function Shelf({ label, icon, children }: { label: string; icon: ReactNode; children: ReactNode }) {
  return (
    <div className="flex h-7 shrink-0 border border-[#d4d4d4] bg-[#fafafa]">
      <div className="flex w-[125px] items-center border-r border-[#d4d4d4] pl-[6px] text-[12px] text-[#555]">
        {icon}
        <span className="ml-[6px]">{label}</span>
      </div>
      <div className="flex items-center gap-[2px] pl-[2px]">{children}</div>
    </div>
  );
}

const pill = "flex h-5 w-[148px] items-center rounded-full pl-[11px] text-[12px] font-semibold tracking-[0.15px] text-white/95";

function View() {
  return (
    <div className="flex w-[984px] shrink-0 flex-col gap-[6px]">
      <Shelf label="Columns" icon={<Icon w={13} h={13} sw={2}><path d="M2 0V2M2 3.500V13M6.500 0V2M6.500 3.500V13M11 0V2M11 3.500V13" /></Icon>}>
        <div className={`${pill} bg-[#4996b2]`}>
          <Icon w={10} h={10} color="#fff" sw={1}><path d="M.5 .5H9.500V9.500H.5ZM5 2.500V7.500M2.500 5H7.500" /></Icon>
          <span className="ml-[6px]">YEAR(Year)</span>
        </div>
      </Shelf>
      <Shelf label="Rows" icon={<Icon w={13} h={13} sw={2}><path d="M0 2H2M3.500 2H13M0 6.500H2M3.500 6.500H13M0 11H2M3.500 11H13" /></Icon>}>
        <div className={`${pill} bg-[#00b180]`}>SUM(Gas Co2)</div>
        <div className={`${pill} bg-[#00b180]`}>SUM(Oil Co2)</div>
        <div className={`${pill} bg-[#00b180]`}>SUM(Oil Co2 Per Cap..</div>
      </Shelf>
      <div className="h-[519px] border border-[#d4d4d4] bg-white">
        <h1 className="h-10 text-center text-[19px] leading-[50px] font-bold tracking-[-0.13px] text-[#dd5356]">GAS AND OIL CO2 AND OIL CO2 PER CAPITA</h1>
        <Chart />
        <div className="ml-[68px] flex h-4 w-[909px] items-center bg-[#f0f0f0]">
          <div className="flex w-[17px] justify-center"><Chevron d="M6.500 1L3 4.500L6.500 8" /></div>
          <div className="h-[15px] w-[860px] bg-[#cdcdcd]" />
          <div className="ml-auto mr-[3px]"><Chevron d="M2.500 1L6 4.500L2.500 8" /></div>
        </div>
      </div>
    </div>
  );
}

const sheetTabs: [string, string][] = [
  ["Sheet 2", "w-[54px] pr-[6px]"], ["Sheet 3", "w-[57px] pr-[4px]"], ["Sheet 4", "w-[57px] pr-[4px]"], ["Sheet 5", "w-[57px] pr-[4px]"],
  ["Sheet 6", "w-[57px] pr-[4px]"], ["Sheet 7", "w-[56px] pr-[3px]"], ["Sheet 8", "w-[57px] pr-[4px]"], ["Sheet 9", "w-[57px] pr-[4px]"],
  ["Sheet 10", "w-[63px] pr-[4px]"], ["Sheet 11", "w-[61px] pr-[3px]"], ["Sheet 12", "w-[62px] pr-[4px]"], ["Sheet 13", "w-[61px] pr-[3px]"],
  ["Sheet 14", "w-[63px] pr-[4px]"], ["Sheet 15", "w-[62px] pr-[4px]"], ["Sheet 16", "w-[63px] pr-[4px]"], ["Sheet 17", "w-[62px] pr-[4px]"],
  ["Sheet 18", "w-[63px] pr-[4px]"], ["Sheet 19", "w-[63px] pr-[4px]"],
];

function SheetTabs() {
  const add = <path d="M9 12.500H16M12.500 9V16" stroke="#444" strokeWidth="1.800" />;
  return (
    <div className="flex h-[31px] border-y border-[#c8c8c8] bg-[#e6e6e6] text-[12px] text-[#666]">
      <div className="flex w-[131px] items-center border-r border-[#c8c8c8] pl-[9px]">
        <span className="pb-[2px]"><Icon w={9} h={12} sw={1.1}><path d="M1 2.800C1 .5 8 .5 8 2.800V9.500C8 11.800 1 11.800 1 9.500ZM1 2.800C1 5 8 5 8 2.800" /></Icon></span>
        <span className="ml-[6px]">Data Source</span>
      </div>
      {sheetTabs.map(([n, w]) => (
        <div key={n} className={`flex shrink-0 items-center justify-center border-r border-[#c8c8c8] whitespace-nowrap ${w}`}>{n}</div>
      ))}
      <div className="flex w-[64px] shrink-0 items-center justify-center border-r border-[#c8c8c8] bg-[#fafafa] pr-[1px] pb-[2px] font-semibold tracking-[0.1px] whitespace-nowrap text-[#444]">Sheet 20</div>
      <div className="flex w-8 items-center justify-center border-r border-[#c8c8c8]"><Icon w={17} h={17} sw={1}><path d="M9 12.500H2.500V2.500H12.500V8M5.500 10.500V7.500M7.500 10.500V5M9.500 9V7" />{add}</Icon></div>
      <div className="flex w-8 items-center justify-center border-r border-[#c8c8c8]"><Icon w={17} h={17} sw={1.1}><path d="M8 13H2.500V2.500H13V8M2.500 7.500H13M7.500 2.500V13" />{add}</Icon></div>
      <div className="flex w-8 items-center justify-center"><Icon w={17} h={17} sw={1.1}><path d="M8 14L2.500 12V2L7.500 4.500L13 2V8M7.500 4.500V13" />{add}</Icon></div>
    </div>
  );
}

function StatusBar() {
  return (
    <div className="flex h-5 bg-[#ebebeb] text-[11px] leading-5 text-[#333]">
      <span className="w-[84px] pl-[3px] tracking-[-0.05px]">32754 marks</span>
      <span className="w-[127px] pl-[3px] tracking-[-0.1px]">3 rows by 46 columns</span>
      <span className="w-[788px] pl-[3px] tracking-[0.12px]">SUM(Gas Co2): 849,158</span>
      <div className="w-[127px] border-l border-[#cfcfcf]" />
      <div className="w-[27px] border-l border-[#cfcfcf]" />
      <div className="w-[27px] border-l border-[#cfcfcf]" />
      <div className="w-[47px] border-l border-[#cfcfcf]" />
      <div className="flex w-[71px] items-center justify-between border-l border-[#cfcfcf] px-[7px]">
        <svg width="8" height="8" viewBox="0 0 8 8"><path d="M0.500 1H2V7H0.500ZM7 1V7L3 4Z" fill="#555" /></svg>
        <svg width="6" height="8" viewBox="0 0 6 8"><path d="M5 0.500V7.500L1 4Z" fill="#555" /></svg>
        <svg width="6" height="8" viewBox="0 0 6 8"><path d="M1 0.500V7.500L5 4Z" fill="#555" /></svg>
        <svg width="8" height="8" viewBox="0 0 8 8"><path d="M6 1H7.500V7H6ZM1 1V7L5 4Z" fill="#555" /></svg>
      </div>
      <div className="flex flex-1 items-center gap-[10px] border-l border-[#cfcfcf] pl-2">
        <svg width="11" height="11" viewBox="0 0 11 11"><path d="M0 1.500H11M0 5.500H11M0 9.500H11" stroke="#bbb" strokeWidth="3" strokeDasharray="3 1" /></svg>
        <svg width="11" height="11" viewBox="0 0 11 11"><path d="M0 0H11V6H0Z" fill="#bbb" /><path d="M0 9.500H11" stroke="#bbb" strokeWidth="3" strokeDasharray="3 1" /></svg>
        <svg width="11" height="11" viewBox="0 0 11 11"><path d="M0 0H11V11H0Z" fill="#5a5a5a" /></svg>
      </div>
    </div>
  );
}

function Taskbar() {
  const slot = "flex h-full w-[49px] shrink-0 items-center justify-center";
  return (
    <div className="flex h-10 items-center bg-linear-to-r from-[#3d2f2a] via-[#2a2529] to-[#262224] text-white">
      <div className="flex h-full w-12 items-center justify-center">
        <svg width="16" height="16" viewBox="0 0 16 16"><path d="M0 2.300L7 1.300V7.500H0ZM8 1.100L16 0V7.500H8ZM0 8.500H7V14.700L0 13.700ZM8 8.500H16V16L8 14.900Z" fill="#fff" /></svg>
      </div>
      <div className="flex h-full w-[288px] items-center border border-[#bdbdbd] bg-[#f3f3f3] pl-3">
        <Icon w={17} h={18} color="#222" sw={1.3}><circle cx="10.500" cy="6.500" r="5.300" /><path d="M6.500 10.500L.8 16.500" /></Icon>
        <span className="ml-[10px] text-[14px] tracking-[-0.15px] text-[#2d2d2d]">Type here to search</span>
      </div>
      <div className={slot}>
        <Icon w={17} h={16} color="#fff" sw={1.3}><path d="M1 0V2.500H11V0M1 5H11V11H1ZM1 16V13.500H11V16M14.500 0V16" /><path d="M13 5.500H16.500" strokeWidth="3" /></Icon>
      </div>
      <div className={`${slot} ml-px`}>
        <svg width="24" height="24" viewBox="0 0 24 24"><path d="M7 5V2.200H17V5" fill="none" stroke="#29a9e8" strokeWidth="2" /><path d="M.5 4.500H23.500V20Q23.500 23.500 20 23.500H4Q.5 23.500 .5 20Z" fill="#f2f2f2" /><path d="M7.500 9.500H11.500V13.500H7.500Z" fill="#f05023" /><path d="M12.700 9.500H16.700V13.500H12.700Z" fill="#7fb900" /><path d="M7.500 14.700H11.500V18.700H7.500Z" fill="#00a3ee" /><path d="M12.700 14.700H16.700V18.700H12.700Z" fill="#feb800" /></svg>
      </div>
      <div className={slot}>
        <svg width="25" height="25" viewBox="0 0 25 25">
          <defs><linearGradient id="edgeTop" x1="0" y1="0" x2="1" y2="0.300"><stop offset="0" stopColor="#2492d8" /><stop offset="0.550" stopColor="#35c4cf" /><stop offset="1" stopColor="#6be05a" /></linearGradient></defs>
          <circle cx="12.500" cy="12.500" r="12" fill="#1379c8" />
          <path d="M.8 11C2 4.500 7 .5 12.500 .5C19.500 .5 24.500 5.500 24.500 11.500C24.500 15 22 17 18.500 17C15.500 17 14 15.800 14.500 14.800C16 12 15 7.500 10 7.500C6 7.500 2.500 9 .8 11Z" fill="url(#edgeTop)" />
          <path d="M10 9.500C5.500 12 6.500 22.500 15 24.200C8 26 1 20.500 .6 12.500C3 8.500 7.500 7.500 10 9.500Z" fill="#1a62ae" />
          <path d="M13.200 12.500C12.500 15.500 15.500 19 23.300 17C22.500 18.500 21.500 20 20.500 20.800C15.500 21.500 10.500 17.500 13.200 12.500Z" fill="#2d2a2c" />
        </svg>
      </div>
      <div className={slot}>
        <svg width="22" height="20" viewBox="0 0 22 20"><path d="M0 1Q0 0 1 0H8L10 2H21Q22 2 22 3V8H0Z" fill="#e6a01e" /><path d="M0 4H22V17.500Q22 18.500 21 18.500H1Q0 18.500 0 17.500Z" fill="#fcd057" /><path d="M4 19.500V12.500Q4 10.500 6 10.500H16Q18 10.500 18 12.500V19.500H14V15H8V19.500Z" fill="#3d8fd6" /></svg>
      </div>
      <div className={slot}>
        <svg width="25" height="23" viewBox="0 0 25 23"><path d="M0 8L12.500 0L25 8V22H0Z" fill="#0f5fa8" /><path d="M2 7H23V17H2Z" fill="#f3f8fb" /><path d="M0 8L12.500 16L25 8V22.500H0Z" fill="#33b1ef" /><path d="M0 22.500L12.500 14L25 22.500Z" fill="#1692dc" /></svg>
      </div>
      <div className="ml-px flex h-full w-[48px] shrink-0 items-center justify-center border-b-2 border-[#76b9ed] bg-[#5b5557]">
        <div className="flex h-[23px] w-[23px] items-center justify-center bg-[#f4f5f6]"><TableauMark size={20} color="#3a6a8c" /></div>
      </div>
      <div className="ml-[5px] flex h-full w-[40px] items-center justify-center border-b-2 border-[#76b9ed]">
        <svg width="26" height="22" viewBox="0 0 26 22"><path d="M7 0H24Q25.500 0 25.500 1.500V6H7Z" fill="#41a5ee" /><path d="M7 5.500H25.500V11H7Z" fill="#2b7cd3" /><path d="M7 11H25.500V16.500H7Z" fill="#185abd" /><path d="M7 16.500H25.500V20.500Q25.500 22 24 22H8.500Q7 22 7 20.500Z" fill="#103f91" /><rect x="0" y="4.500" width="13.500" height="13.500" rx="1" fill="#185abd" /><text x="6.800" y="14.800" fontSize="10" fontWeight="700" fontFamily="'Open Sans', sans-serif" fill="#fff" textAnchor="middle">W</text></svg>
      </div>
      <div className="ml-auto flex h-full items-center">
        <svg width="18" height="24" viewBox="0 0 18 24"><path d="M0 1.500Q0 0 1.500 0H12L18 6V22.500Q18 24 16.500 24H1.500Q0 24 0 22.500Z" fill="#2fa8ec" /><path d="M12 0L18 6H12Z" fill="#9bdcfb" /><path d="M4 14V9M9 14V11.500M14 14V8" stroke="#0b5a9e" strokeWidth="2.500" /><path d="M2.500 17H15.500M2.500 20.500H11M13 20.500H15.500" stroke="#fff" strokeWidth="1.700" /></svg>
        <span className="ml-[11px] w-[119px] text-[14px] tracking-[-0.38px] whitespace-nowrap">Earnings upcoming</span>
        <div className="ml-6"><Icon w={12} h={8} color="#fff" sw={1.3}><path d="M.8 7L6 1.500L11.200 7" /></Icon></div>
        <div className="ml-[11px]"><Icon w={16} h={15} color="#fff" sw={1.100}><path d="M4.500 2.500H15.500V10.500H4.500M10 10.500V13.500M7 13.500H13M3 6V10.500H5M.8 1.500H5V5.500H.8Z" /></Icon></div>
        <div className="ml-[9px]"><Icon w={15} h={10} color="#fff" sw={1.1}><path d="M.6 1H13V9H.6ZM14.400 3.500V6.500" /><path d="M2.500 3H10V7H2.500Z" fill="#fff" stroke="none" /></Icon></div>
        <div className="ml-2"><Icon w={17} h={17} color="#fff" sw={1.2}><path d="M1 4.500L15.500 1.500V9M1 4.500V13.500L8 14.500M5 7.500C6 5.500 10 5 11 7M11 4.500V7H8.500M5 12V9.500H7.500" /><circle cx="12.700" cy="12.700" r="3.700" fill="#f7941d" stroke="none" /></Icon></div>
        <span className="ml-[9px] w-[24px] text-[12px] tracking-[-0.4px]">ENG</span>
        <div className="ml-[11px] flex w-[60px] flex-col items-center text-[12px] leading-[18px] tracking-[-0.5px] whitespace-nowrap">
          <span>07:10</span>
          <span>26-04-2023</span>
        </div>
        <div className="ml-[16px]">
          <svg width="26" height="26" viewBox="0 0 26 26"><path d="M1 2H17V14H8L4.500 17.500V14H1Z" fill="#fff" /><path d="M4 5.500H14M4 8H14M4 10.500H10" stroke="#2b2528" /><circle cx="16.500" cy="16.500" r="8" fill="#38363a" stroke="#aaa" /><text x="16.500" y="21" fontSize="12" fontFamily="'Open Sans', sans-serif" fill="#fff" textAnchor="middle">1</text></svg>
        </div>
        <div className="mr-[3px] ml-[12px] h-10 w-px bg-[#67625f]" />
      </div>
    </div>
  );
}

export default function App() {
  return (
    <div className="flex h-[768px] w-[1366px] flex-col overflow-hidden bg-[#f4f4f4] font-['Open_Sans',sans-serif]">
      <TitleBar />
      <MenuBar />
      <Toolbar />
      <div className="flex h-[593px] shrink-0 gap-[6px] overflow-hidden">
        <DataPane />
        <Cards />
        <View />
      </div>
      <SheetTabs />
      <StatusBar />
      <Taskbar />
    </div>
  );
}
